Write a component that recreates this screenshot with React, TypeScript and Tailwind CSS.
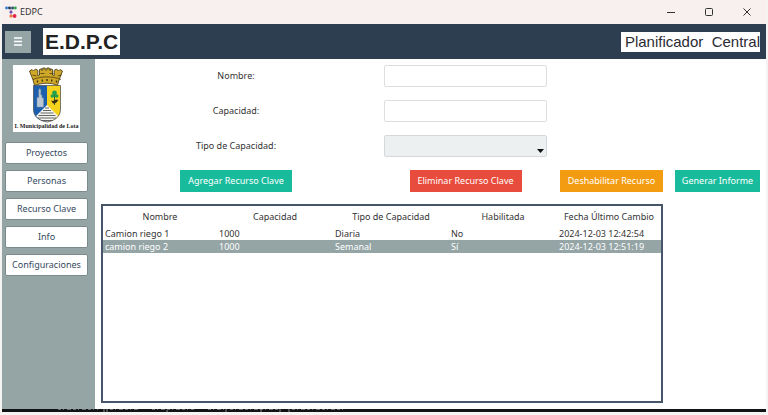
import React, { useState } from 'react';

type Recurso = {
  nombre: string;
  capacidad: string;
  tipo: string;
  habilitada: string;
  fecha: string;
};

const recursos: Recurso[] = [
  { nombre: 'Camion riego 1', capacidad: '1000', tipo: 'Diaria', habilitada: 'No', fecha: '2024-12-03 12:42:54' },
  { nombre: 'camion riego 2', capacidad: '1000', tipo: 'Semanal', habilitada: 'Sí', fecha: '2024-12-03 12:51:19' },
];

const menuItems = ['Proyectos', 'Personas', 'Recurso Clave', 'Info', 'Configuraciones'];

const AppIcon = () => (
  <svg width="12" height="12" viewBox="0 0 12 12" aria-hidden="true">
    <path d="M2 2h8M6 2v8h3" stroke="#9a8fae" strokeWidth="0.8" fill="none" />
    <circle cx="1.5" cy="2" r="1.4" fill="#2f7fd6" />
    <circle cx="4.5" cy="2" r="1.4" fill="#1d3a5c" />
    <circle cx="7.6" cy="2" r="1.4" fill="#2c5364" />
    <circle cx="10.4" cy="2" r="1.4" fill="#2fa84f" />
    <circle cx="6" cy="6" r="1.6" fill="#7a4fb5" />
    <circle cx="6" cy="10" r="1.6" fill="#f0703a" />
    <circle cx="9.6" cy="10" r="1.9" fill="#e5264b" />
  </svg>
);

const Crest = () => (
  <svg className="shrink-0" width="36" height="56" viewBox="0 0 36 56" aria-hidden="true">
    {/* mural crown */}
    <path
      d="M0.500 4l2.500-1.500 1.500 1.500 2-2 2.500 1.500-.3 5 1.800-.5V2.500l2-.8v1.500h1.200V1h2.500v2h1.600v-2h2.500v2.200h1.200V1.700l2 .8V8l1.800.5-.3-5 2.500-1.500 2 2 1.500-1.500 2.500 1.500-3.500 9-1.500 5.500C23 15.500 13 15.500 5.500 18.500L4 13z"
      fill="#d0a828"
      stroke="#3d320c"
      strokeWidth="0.8"
    />
    <path d="M4 12.500c8.500-3.500 19.500-3.500 28 0M3.500 8l4 1M11.500 6.500h4M20.500 6.500h4M32.500 8l-4 1" stroke="#4a3c10" strokeWidth="0.8" fill="none" />
    <path d="M8.500 13.500v2M13.300 12.500v2M18 12v2M22.700 12.500v2M27.500 13.500v2" stroke="#3d320c" strokeWidth="1.400" />
    {/* shield */}
    <path d="M4.500 18.500H18V55C10 53.500 4.500 50 4.500 42z" fill="#1c5fae" />
    <path d="M18 18.500h13.500V42c0 8-5.500 11.500-13.500 13z" fill="#f6d21c" />
    <path d="M18 38L7 49c2.500 3.500 6.500 5.200 11 6 4.500-.8 8.500-2.500 11-6z" fill="#f4f4f0" />
    <path d="M16 41h4M14 43.500h8M11.500 46h13M9.500 48.500h17M9 51h18M12.500 53.500h11" stroke="#555" strokeWidth="0.9" />
    <path d="M8 40v-9.500h1.800v-7.500l1-1.500 1 1.500v5h1.200v3h1.500v9z" fill="#b9c6d3" stroke="#7f93a8" strokeWidth="0.500" />
    {/* tree and bird */}
    <path d="M25.500 28v10" stroke="#2a6b2f" strokeWidth="1" />
    <circle cx="25.500" cy="26" r="2.400" fill="#22a04b" />
    <circle cx="23.300" cy="29" r="1.800" fill="#22a04b" />
    <circle cx="27.700" cy="29" r="1.800" fill="#22a04b" />
    <path d="M22 33.500l2 .5 3-1.500 2.500.5-2.500 3-3 .5z" fill="#3a2a12" />
    <path d="M4.500 18.500h27V42c0 8-5.500 11.500-13.500 13-8-1.500-13.500-5-13.500-13z" fill="none" stroke="#444" strokeWidth="0.7" />
  </svg>
);

const TitleBar = () => (
  <div className="flex h-6 items-center justify-between bg-[#f8efef] pl-[3px]">
    <div className="flex items-center gap-[3px] text-[9px] text-[#333]">
      <AppIcon />
      <span>EDPC</span>
    </div>
    <div className="flex items-center gap-7 pr-3.5 text-[#333]">
      <button type="button" aria-label="Minimizar">
        <svg width="10" height="10" viewBox="0 0 10 10"><path d="M1 5.500h8" stroke="currentColor" /></svg>
      </button>
      <button type="button" aria-label="Maximizar">
        <svg width="10" height="10" viewBox="0 0 10 10"><rect x="1.500" y="1.500" width="7" height="7" rx="1" fill="none" stroke="currentColor" /></svg>
      </button>
      <button type="button" aria-label="Cerrar">
        <svg width="10" height="10" viewBox="0 0 10 10"><path d="M1.500 1.500l7 7M8.500 1.500l-7 7" stroke="currentColor" /></svg>
      </button>
    </div>
  </div>
);

const Header = () => (
  <header className="flex h-[35px] items-center justify-between bg-[#2c3e50] pl-[3px] pr-1.5 font-['Liberation_Sans',sans-serif]">
    <div className="flex items-center gap-3">
      <button type="button" aria-label="Menú" className="flex h-[22px] w-[26px] items-center justify-center bg-[#95a5a6]">
        <svg width="8" height="9" viewBox="0 0 8 9"><path d="M0 1h8M0 4.500h8M0 8h8" stroke="#fff" strokeWidth="1.600" /></svg>
      </button>
      <h1 className="bg-white px-0.5 text-[21px] leading-[27px] font-bold text-[#222]">E.D.P.C</h1>
    </div>
    <p className="bg-white pl-1 text-[15px] leading-5 whitespace-pre text-[#2b2b33]">Planificador  Central</p>
  </header>
);

const Sidebar = () => (
  <aside className="flex w-[93px] shrink-0 flex-col bg-[#95a5a6] pt-1.5">
    <div className="ml-[11px] flex h-[67px] w-[67px] flex-col items-center bg-white pt-0.5">
      <Crest />
      <p className="font-['Liberation_Serif',serif] text-[6px] leading-[7px] font-bold whitespace-nowrap text-[#222]">I. Municipalidad de Lota</p>
    </div>
    <nav className="mt-2.5 flex flex-col gap-1.5 pl-[3px] pr-[7px]">
      {menuItems.map(item => (
        <button key={item} type="button" className="h-[22px] rounded-xs border border-[#7b8a8b] bg-white text-[9px] text-[#34495e]">
          {item}
        </button>
      ))}
    </nav>
  </aside>
);

const ResourceTable = () => {
  const [selected, setSelected] = useState(1);

  return (
    <div className="col-span-3 mx-1.5 mt-3 h-[199px] border-2 border-[#46556a] bg-white">
      <table className="w-full table-fixed text-left text-[9px] leading-[13px] text-[#333]">
        <colgroup>
          <col className="w-[114px]" />
          <col className="w-[116px]" />
          <col className="w-[116px]" />
          <col className="w-[108px]" />
          <col className="w-[104px]" />
        </colgroup>
        <thead>
          <tr className="h-[21px] text-center">
            <th className="font-normal">Nombre</th>
            <th className="font-normal">Capacidad</th>
            <th className="font-normal">Tipo de Capacidad</th>
            <th className="font-normal">Habilitada</th>
            <th className="font-normal">Fecha Último Cambio</th>
          </tr>
        </thead>
        <tbody>
          {recursos.map((recurso, i) => (
            <tr
              key={recurso.nombre}
              onClick={() => setSelected(i)}
              className={i === selected ? 'bg-[#95a5a6] text-white' : ''}
            >
              <td className="pl-0.5">{recurso.nombre}</td>
              <td className="pl-0.5">{recurso.capacidad}</td>
              <td className="pl-0.5">{recurso.tipo}</td>
              <td className="pl-0.5">{recurso.habilitada}</td>
              <td className="pl-0.5">{recurso.fecha}</td>
            </tr>
          ))}
        </tbody>
      </table>
    </div>
  );
};

const App = () => {
  return (
    <div className="bg-[#f5f4f2] px-0.5 pb-[3px] font-['Noto_Sans',sans-serif]">
      <TitleBar />
      <Header />
      <div className="flex bg-white">
        <Sidebar />
        <main className="grid flex-1 grid-cols-[minmax(0,282fr)_minmax(0,177fr)_minmax(0,115fr)_minmax(0,97fr)] content-start pt-1.5 pb-1.5 text-[9px] text-[#333]">
          <div className="col-span-4 grid grid-cols-subgrid items-center justify-items-center gap-y-[13px]">
            <label htmlFor="nombre" className="col-start-1">Nombre:</label>
            <input id="nombre" type="text" className="col-start-2 h-[22px] w-[163px] rounded-xs border border-[#dcdfe1] bg-white px-1" />
            <label htmlFor="capacidad" className="col-start-1">Capacidad:</label>
            <input id="capacidad" type="text" className="col-start-2 h-[22px] w-[163px] rounded-xs border border-[#dcdfe1] bg-white px-1" />
            <label htmlFor="tipo" className="col-start-1">Tipo de Capacidad:</label>
            <div className="relative col-start-2 h-[22px]">
              <select id="tipo" defaultValue="" className="block h-[22px] w-[163px] appearance-none rounded-xs border border-[#d5d9db] bg-[#ecf0f1] px-1">
                <option value=""></option>
                <option value="diaria">Diaria</option>
                <option value="semanal">Semanal</option>
              </select>
              <svg className="pointer-events-none absolute right-[3px] bottom-1" width="7" height="4" viewBox="0 0 7 4"><path d="M0 0h7L3.500 4z" fill="#111" /></svg>
            </div>
            <button type="button" className="col-start-1 h-[22px] w-28 bg-[#18bc9c] text-white">Agregar Recurso Clave</button>
            <button type="button" className="h-[22px] w-28 bg-[#e74c3c] text-white">Eliminar Recurso Clave</button>
            <button type="button" className="h-[22px] w-[103px] bg-[#f39c12] text-white">Deshabilitar Recurso</button>
            <button type="button" className="h-[22px] w-[85px] bg-[#18bc9c] text-white">Generar Informe</button>
          </div>
          <ResourceTable />
        </main>
      </div>
      {/* edge of the console window behind */}
      <div className="flex h-[3px] bg-[#111316] pl-14">
        <svg width="288" height="3" viewBox="0 0 288 3" aria-hidden="true">
          <path d="M0 .5h40M52 .5h28M94 .5h42M150 .5h16M172 .5h50M234 .5h54" stroke="#6d6d6d" strokeDasharray="3 2 1 3 4 2" />
          <path d="M46 0v3M49 0v3M109 1v2M168 0v3M203 0v3M222 0v3M231 0v3" stroke="#8a8a8a" />
        </svg>
      </div>
    </div>
  );
};

export default App;
